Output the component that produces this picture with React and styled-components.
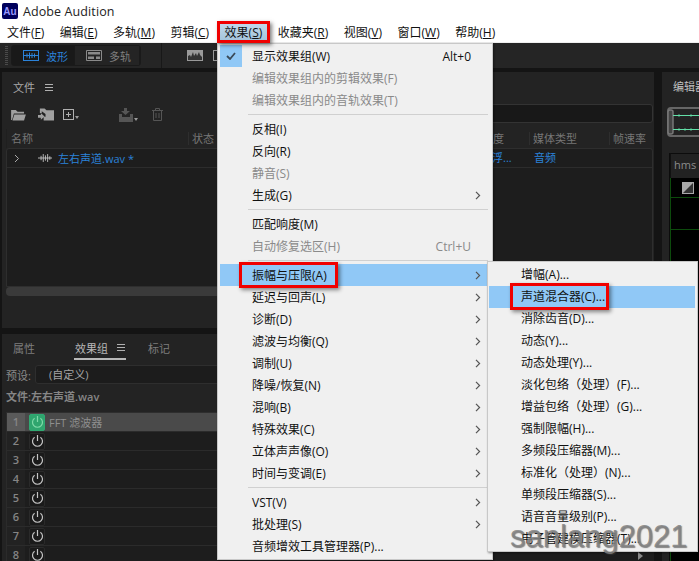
import React from 'react';
import styled, { createGlobalStyle } from 'styled-components';

const GlobalStyle = createGlobalStyle`
  html, body {
    margin: 0;
    padding: 0;
    background: #141414;
  }
  * {
    box-sizing: border-box;
  }
`;

const FONT = '"Open Sans", "Noto Sans CJK SC", sans-serif';
const BLUE = '#2b82d9';
const HIGHLIGHT = '#90c8f6';

const menuBar = [
  ['文件(', 'F', ')'],
  ['编辑(', 'E', ')'],
  ['多轨(', 'M', ')'],
  ['剪辑(', 'C', ')'],
  ['效果(', 'S', ')'],
  ['收藏夹(', 'R', ')'],
  ['视图(', 'V', ')'],
  ['窗口(', 'W', ')'],
  ['帮助(', 'H', ')']
];

const effectsMenu = [
  { label: '显示效果组(W)', shortcut: 'Alt+0', checked: true },
  { label: '编辑效果组内的剪辑效果(F)', disabled: true },
  { label: '编辑效果组内的音轨效果(T)', disabled: true },
  { separator: true },
  { label: '反相(I)' },
  { label: '反向(R)' },
  { label: '静音(S)', disabled: true },
  { label: '生成(G)', arrow: true },
  { separator: true },
  { label: '匹配响度(M)' },
  { label: '自动修复选区(H)', shortcut: 'Ctrl+U', disabled: true },
  { separator: true },
  { label: '振幅与压限(A)', arrow: true, active: true },
  { label: '延迟与回声(L)', arrow: true },
  { label: '诊断(D)', arrow: true },
  { label: '滤波与均衡(Q)', arrow: true },
  { label: '调制(U)', arrow: true },
  { label: '降噪/恢复(N)', arrow: true },
  { label: '混响(B)', arrow: true },
  { label: '特殊效果(C)', arrow: true },
  { label: '立体声声像(O)', arrow: true },
  { label: '时间与变调(E)', arrow: true },
  { separator: true },
  { label: 'VST(V)', arrow: true },
  { label: '批处理(S)', arrow: true },
  { label: '音频增效工具管理器(P)...' }
];

const amplitudeMenu = [
  { label: '增幅(A)...' },
  { label: '声道混合器(C)...', active: true },
  { label: '消除齿音(D)...' },
  { label: '动态(Y)...' },
  { label: '动态处理(Y)...' },
  { label: '淡化包络（处理）(F)...' },
  { label: '增益包络（处理）(G)...' },
  { label: '强制限幅(H)...' },
  { label: '多频段压缩器(M)...' },
  { label: '标准化（处理）(N)...' },
  { label: '单频段压缩器(S)...' },
  { label: '语音音量级别(P)...' },
  { label: '电子管建模压缩器(T)...' }
];

const Power = ({ color = '#c4c4c4' }) => (
  <svg width="13" height="14" viewBox="0 0 13 14" fill="none" stroke={color} strokeWidth="1.2">
    <path d="M6.5 1v6" />
    <path d="M3.6 3.2a5 5 0 1 0 5.8 0" />
  </svg>
);

const Chevron = () => (
  <svg width="6" height="9" viewBox="0 0 6 9" fill="none" stroke="#555" strokeWidth="1.2">
    <path d="M1 .8l3.6 3.7L1 8.2" />
  </svg>
);

const WaveGlyph = ({ color, width = 16 }) => (
  <svg width={width} height="10" viewBox="0 0 16 10" fill="none" stroke={color} strokeWidth="1">
    <path d="M0 5h16M3.5 2.5v5M6 .5v9M8.5 2v6M11 .5v9M13.5 3v4" />
  </svg>
);

export default function App() {
  return (
    <Page>
      <GlobalStyle />
      <TitleBar>
        <Logo>Au</Logo>
        <AppName>Adobe Audition</AppName>
      </TitleBar>
      <MenuBar>
        {menuBar.map(([before, key, after]) => (
          <MenuBarItem key={key}>
            {key === 'S' ? (
              <TopMark>
                {before}<u>{key}</u>{after}
              </TopMark>
            ) : (
              <>
                {before}<u>{key}</u>{after}
              </>
            )}
          </MenuBarItem>
        ))}
      </MenuBar>

      <Toolbar>
        <Grip />
        <ModeGroup>
          <ModeButton $active>
            <svg width="16" height="11" viewBox="0 0 16 11" fill="none" stroke={BLUE}>
              <rect x=".5" y=".5" width="15" height="10" />
              <path d="M1 5.5h14M4 3.5v4M6.5 2.5v6M9 3v5M11.5 3.5v4" />
            </svg>
            波形
          </ModeButton>
          <ModeButton>
            <svg width="16" height="11" viewBox="0 0 16 11" fill="#8a8a8a" stroke="#8a8a8a">
              <path d="M.5.5h15v10H.5z" fill="none" />
              <path d="M2 2h12v2.500H2zM2 6.500h6V9H2zM10 6.500h4V9h-4z" stroke="none" />
            </svg>
            多轨
          </ModeButton>
        </ModeGroup>
        <ToolDivider />
        <svg width="16" height="11" viewBox="0 0 16 11">
          <rect width="16" height="11" fill="#9a9a9a" />
          <path d="M1 10V6l2-1 1 2 2-5 1 4 2-3 1 3 2-4 1 3 2 2v3z" fill="#333" />
        </svg>
        <SmallSquare />
      </Toolbar>

      <Workspace>
        <LeftColumn>
          <FilesPanel>
            <PanelHead>
              <PanelTitle>文件</PanelTitle>
              <Hamburger />
            </PanelHead>
            <FileTools>
              <svg width="15" height="12" viewBox="0 0 16 13" fill="#a0a0a0">
                <path d="M0 1h5l2 2h7v2H3L1 12H0zM3.500 6H16l-2 6.500H1.500z" />
              </svg>
              <ImportIcon width="16" height="13" viewBox="0 0 17 13" fill="#a0a0a0">
                <path d="M2 0h5l2 2h8v11H6V9h2V6L4 3v2H2z" />
                <path d="M0 7h3V5l4 3.500L3 12v-2H0z" />
              </ImportIcon>
              <NewIcon>
                <svg width="11" height="11" viewBox="0 0 11 11" fill="none" stroke="#b0b0b0">
                  <rect x=".5" y=".5" width="10" height="10" />
                  <path d="M3 5.500h5M5.500 3v5" />
                </svg>
                <Caret />
              </NewIcon>
              <DimGroup>
                <svg width="14" height="14" viewBox="0 0 14 14" fill="#555">
                  <path d="M5 0h3v3h3L6.500 7 2 3h3zM0 6h3v3h8V6h3v8H0z" />
                </svg>
                <Caret />
              </DimGroup>
              <svg width="11" height="13" viewBox="0 0 11 13" fill="none" stroke="#555">
                <path d="M0 2.500h11M3.500 2.500V.5h4v2M1.500 2.500v10h8v-10M4 5v5M7 5v5" />
              </svg>
            </FileTools>
            <SearchField />
            <Columns>
              <ColumnName $left={4}>名称</ColumnName>
              <ColumnName $left={185}>状态</ColumnName>
              <ColumnName $left={486}>度</ColumnName>
              <ColumnName $left={526}>媒体类型</ColumnName>
              <ColumnName $left={606}>帧速率</ColumnName>
            </Columns>
            <FileList>
              <FileRow>
                <ExpandArrow>
                  <svg width="6" height="9" viewBox="0 0 6 9" fill="none" stroke="#aaa">
                    <path d="M1 1l3.500 3.500L1 8" />
                  </svg>
                </ExpandArrow>
                <WaveGlyph color="#c8c8c8" width={14} />
                <FileName>左右声道.wav *</FileName>
                <FileCell $left={474}>位浮...</FileCell>
                <FileCell $left={527}>音频</FileCell>
              </FileRow>
            </FileList>
            <ScrollStub />
          </FilesPanel>

          <EffectsPanel>
            <Tabs>
              <Tab>属性</Tab>
              <Tab $active $left={38}>
                效果组
                <Hamburger />
              </Tab>
              <Tab $left={21}>标记</Tab>
            </Tabs>
            <PresetRow>
              <PresetLabel>预设:</PresetLabel>
              <PresetSelect>(自定义)</PresetSelect>
            </PresetRow>
            <FileCaption>文件:左右声道.wav</FileCaption>
            <Rack>
              {[1, 2, 3, 4, 5, 6, 7, 8].map(n => (
                <RackRow key={n} $active={n === 1}>
                  <RackNumber $active={n === 1}>{n}</RackNumber>
                  <PowerButton $active={n === 1}>
                    <Power color={n === 1 ? '#7fd9a8' : '#c4c4c4'} />
                  </PowerButton>
                  {n === 1 && <RackLabel>FFT 滤波器</RackLabel>}
                </RackRow>
              ))}
            </Rack>
            <ScrollArrow />
          </EffectsPanel>
        </LeftColumn>

        <EditorPanel>
          <EditorTitle>编辑器</EditorTitle>
          <Overview>
            <svg width="40" height="30" viewBox="0 0 40 30" fill="none">
              <rect x="1" y="1" width="60" height="28" rx="3" stroke="#666" strokeWidth="2" />
              <rect x="1" y="3" width="5" height="24" rx="2" stroke="#777" strokeWidth="1.500" fill="#444" />
              <path d="M6 8.500h34M6 22.500h34" stroke="#63e0a8" />
              <path d="M12 7v3M24 7v3M12 21v3M18 21v3M24 21v3" stroke="#63e0a8" strokeWidth=".7" />
            </svg>
          </Overview>
          <Timeline>
            <TimelineHead>hms</TimelineHead>
            <TrackRow $height={20}>
              <svg width="12" height="12" viewBox="0 0 12 12">
                <rect width="12" height="12" fill="#a8a8a8" />
                <path d="M11 1v10H1z" fill="#333" />
              </svg>
            </TrackRow>
            <TrackRow $height={32} />
            <TrackFill />
          </Timeline>
        </EditorPanel>
      </Workspace>

      <MainMenu>
        {effectsMenu.map((item, i) =>
          item.separator ? (
            <Separator key={i} />
          ) : (
            <MainItem key={i} $active={item.active} $disabled={item.disabled}>
              <CheckCell $checked={item.checked}>
                {item.checked && (
                  <svg width="10" height="8" viewBox="0 0 10 8" fill="none" stroke="#3a4a58" strokeWidth="1.800">
                    <path d="M1 4l3 3 5-6" />
                  </svg>
                )}
              </CheckCell>
              {item.active ? <LabelMark $l={13} $r={11} $v={4}>{item.label}</LabelMark> : <span>{item.label}</span>}
              <Shortcut>{item.shortcut}</Shortcut>
              {item.arrow && <Chevron />}
            </MainItem>
          )
        )}
      </MainMenu>

      <SubMenu>
        {amplitudeMenu.map(item => (
          <SubItem key={item.label} $active={item.active}>
            {item.active ? <LabelMark $l={11} $r={4} $v={5}>{item.label}</LabelMark> : item.label}
          </SubItem>
        ))}
      </SubMenu>

      <Watermark>sanlang2021</Watermark>
    </Page>
  );
}

const Page = styled.div`
  position: relative;
  display: flex;
  flex-direction: column;
  width: 699px;
  height: 561px;
  overflow: hidden;
  background: #141414;
  font-family: ${FONT};
  font-size: 11px;
  color: #8f8f8f;
`;

const TitleBar = styled.div`
  display: flex;
  align-items: center;
  gap: 5px;
  height: 22px;
  padding: 0 0 0 2px;
  background: #fff;
`;

const Logo = styled.div`
  display: flex;
  align-items: center;
  justify-content: center;
  width: 16px;
  height: 16px;
  border-radius: 2px;
  background: #00005b;
  color: #9999ff;
  font-family: "Liberation Sans", sans-serif;
  font-size: 10px;
  font-weight: 700;
`;

const AppName = styled.div`
  color: #222;
  font-size: 12.500px;
  letter-spacing: .1px;
`;

const MenuBar = styled.div`
  display: flex;
  align-items: center;
  gap: 15.500px;
  height: 21px;
  padding-left: 7px;
  background: #fff;
  border-bottom: 1px solid #eee;
  font-size: 12px;
`;

const MenuBarItem = styled.div`
  position: relative;
  height: 22px;
  color: #111;
  white-space: nowrap;
  line-height: 24px;
  u {
    text-underline-offset: 1px;
  }
`;

const TopMark = styled.span`
  display: block;
  position: relative;
  z-index: 5;
  height: 22px;
  margin: 0 -8px;
  padding: 0 8px;
  background: linear-gradient(#c6dcec, #9fc1da);
  outline: 3px solid #f00000;
  outline-offset: -3px;
  box-shadow: 2px 2px 4px rgba(0, 0, 0, .5);
`;

const Toolbar = styled.div`
  display: flex;
  align-items: center;
  height: 25px;
  padding: 0 0 0 5px;
  background: #252525;
  svg {
    flex: none;
  }
`;

const Grip = styled.div`
  width: 3px;
  height: 20px;
  background: repeating-linear-gradient(#4a4a4a 0 1px, transparent 1px 2px);
`;

const ModeGroup = styled.div`
  display: flex;
  margin: 0 20px 0 3px;
  height: 21px;
  border: 1px solid #1a1a1a;
  border-radius: 3px;
  background: #1f1f1f;
`;

const ModeButton = styled.div`
  display: flex;
  align-items: center;
  gap: 7px;
  width: ${props => (props.$active ? '63px' : '65px')};
  padding-left: 11px;
  background: ${props => (props.$active ? '#191919' : '#242424')};
  border-right: 1px solid #1a1a1a;
  color: ${props => (props.$active ? BLUE : '#7e7e7e')};
`;

const ToolDivider = styled.div`
  width: 1px;
  height: 25px;
  margin-right: 25px;
  background: #181818;
`;

const SmallSquare = styled.div`
  width: 6px;
  height: 11px;
  margin-left: 10px;
  border: 1px solid #999;
`;

const Workspace = styled.div`
  flex: 1;
  display: grid;
  grid-template-columns: 652px 1fr;
  gap: 8px;
  padding: 4px 0 0 2px;
  min-height: 0;
  background: #141414;
`;

const LeftColumn = styled.div`
  display: grid;
  grid-template-rows: 256px 1fr;
  gap: 6px;
  min-height: 0;
`;

const FilesPanel = styled.section`
  position: relative;
  display: flex;
  flex-direction: column;
  background: #232323;
  padding: 0 0 0 4px;
`;

const PanelHead = styled.div`
  display: flex;
  align-items: center;
  gap: 10px;
  height: 30px;
  padding-left: 7px;
`;

const PanelTitle = styled.div`
  color: #a8a8a8;
`;

const Hamburger = styled.span`
  display: inline-block;
  position: relative;
  width: 8px;
  height: 7px;
  border-top: 1px solid #b0b0b0;
  border-bottom: 1px solid #b0b0b0;
  &::after {
    content: '';
    position: absolute;
    left: 0;
    right: 0;
    top: 2px;
    height: 1px;
    background: #b0b0b0;
  }
`;

const FileTools = styled.div`
  display: flex;
  align-items: center;
  height: 21px;
  padding-left: 5px;
  margin-top: 2px;
  color: #a0a0a0;
`;

const ImportIcon = styled.svg`
  margin-left: 12px;
`;

const NewIcon = styled.div`
  display: flex;
  align-items: flex-end;
  margin-left: 9px;
`;

const Caret = styled.span`
  width: 0;
  height: 0;
  margin: 0 0 1px 1px;
  border: 2px solid transparent;
  border-top: 3px solid #9a9a9a;
  border-bottom: 0;
`;

const DimGroup = styled.div`
  display: flex;
  align-items: flex-end;
  margin: 0 14px 0 40px;
`;

const SearchField = styled.div`
  position: absolute;
  right: 1px;
  top: 32px;
  width: 436px;
  height: 19px;
  border: 1px solid #333;
  border-radius: 3px;
  background: #181818;
`;

const Columns = styled.div`
  position: relative;
  height: 19px;
  margin-top: 4px;
  color: #767676;
  background: #232323;
  border-left: 1px solid #1f1f1f;
`;

const ColumnName = styled.span`
  position: absolute;
  left: ${props => props.$left}px;
  top: 0;
  line-height: 19px;
  &:not(:first-child)::before {
    content: '';
    position: absolute;
    left: -4px;
    top: 3px;
    bottom: 3px;
    width: 1px;
    background: #2e2e2e;
  }
`;

const FileList = styled.div`
  margin: 0 1px 0 0;
  height: 139px;
  background: #1d1d1d;
  border: 1px solid #2e2e2e;
  border-radius: 3px 3px 0 0;
`;

const FileRow = styled.div`
  position: relative;
  display: flex;
  align-items: center;
  height: 19px;
  border-bottom: 1px solid #2c2c2c;
  color: ${BLUE};
`;

const ExpandArrow = styled.span`
  display: flex;
  width: 31px;
  padding-left: 7px;
`;

const FileName = styled.span`
  margin-left: 6px;
  white-space: nowrap;
`;

const FileCell = styled.span`
  position: absolute;
  left: ${props => props.$left}px;
  top: 0;
  line-height: 18px;
  white-space: nowrap;
`;

const ScrollStub = styled.div`
  height: 9px;
  margin: 0 1px 0 0;
  background: #3a3a3a;
  border-radius: 4px;
`;

const EffectsPanel = styled.section`
  position: relative;
  display: flex;
  flex-direction: column;
  min-height: 0;
  overflow: hidden;
  background: #232323;
`;

const ScrollArrow = styled.span`
  position: absolute;
  left: 636px;
  bottom: 1px;
  border-left: 5px solid #8a8a8a;
  border-top: 4px solid transparent;
  border-bottom: 4px solid transparent;
`;

const Tabs = styled.div`
  display: flex;
  flex: none;
  height: 26px;
  padding-left: 10px;
`;

const Tab = styled.div`
  display: flex;
  align-items: center;
  gap: 9px;
  height: 26px;
  margin-left: ${props => props.$left || 0}px;
  padding: 3px 1px 0;
  color: ${props => (props.$active ? '#b8b8b8' : '#7e7e7e')};
  border-bottom: 2px solid ${props => (props.$active ? '#b8b8b8' : 'transparent')};
`;

const PresetRow = styled.div`
  display: flex;
  flex: none;
  align-items: center;
  gap: 4px;
  height: 19px;
  margin-top: 5px;
  padding-left: 4px;
`;

const PresetLabel = styled.span`
  color: #8a8a8a;
`;

const PresetSelect = styled.div`
  flex: 1;
  height: 19px;
  padding-left: 13px;
  line-height: 18px;
  color: #a4a4a4;
  background: #1c1c1c;
  border: 1px solid #2e2e2e;
  border-radius: 3px;
`;

const FileCaption = styled.div`
  flex: none;
  height: 20px;
  margin-top: 3px;
  padding-left: 4px;
  line-height: 20px;
  font-weight: 600;
  color: #868686;
`;

const Rack = styled.div`
  flex: none;
  margin: 5px 0 0 4px;
  border-top: 1px solid #2e2e2e;
  border-left: 1px solid #2b2b2b;
`;

const RackRow = styled.div`
  display: flex;
  align-items: center;
  height: 19px;
  background: ${props => (props.$active ? '#4a4a4a' : '#1d1d1d')};
  border-bottom: 1px solid #2b2b2b;
`;

const RackNumber = styled.div`
  width: 18px;
  height: 100%;
  margin-right: 1px;
  line-height: 18px;
  text-align: center;
  font-weight: 600;
  color: #858585;
  background: ${props => (props.$active ? '#5a5a5a' : '#222')};
`;

const PowerButton = styled.div`
  display: flex;
  align-items: center;
  justify-content: center;
  flex: none;
  width: 16px;
  height: 17px;
  margin-left: 3px;
  border: 1px solid ${props => (props.$active ? '#2faa72' : '#2a2a2a')};
  border-radius: 2px;
  background: ${props => (props.$active ? '#2fa56e' : '#1a1a1a')};
`;

const RackLabel = styled.span`
  margin-left: 4px;
  color: #8e8e8e;
  white-space: nowrap;
`;

const EditorPanel = styled.section`
  display: flex;
  flex-direction: column;
  min-width: 0;
  overflow: hidden;
  background: #232323;
  padding-left: 5px;
`;

const EditorTitle = styled.div`
  flex: none;
  height: 30px;
  padding-left: 6px;
  line-height: 29px;
  color: #c0c0c0;
  white-space: nowrap;
`;

const Overview = styled.div`
  flex: none;
  height: 30px;
  margin-top: 5px;
`;

const Timeline = styled.div`
  flex: 1;
  display: flex;
  flex-direction: column;
  margin: 16px 0 0 2px;
  background: #000;
  border-left: 1px solid #0c0c0c;
`;

const TimelineHead = styled.div`
  flex: none;
  height: 25px;
  padding-left: 3px;
  line-height: 22px;
  color: #8c8c8c;
  background: #222;
  border-left: 1px solid #111;
  border-top: 1px solid #0c0c0c;
`;

const TrackRow = styled.div`
  display: flex;
  flex: none;
  align-items: center;
  height: ${props => props.$height}px;
  padding-left: 11px;
  border-left: 1px solid #0c4a0c;
  border-bottom: 1px solid #0c4a0c;
`;

const TrackFill = styled.div`
  flex: 1;
  border-left: 1px solid #0c4a0c;
`;

const MainMenu = styled.nav`
  position: absolute;
  left: 217px;
  top: 43px;
  bottom: 1px;
  width: 276px;
  padding: 1px 2px;
  background: #f0f0f0;
  border: 1px solid #c8c8c8;
  box-shadow: 1px 1px 2px rgba(0, 0, 0, .4);
  font-size: 12px;
  z-index: 2;
`;

const MainItem = styled.div`
  display: flex;
  align-items: center;
  height: 22px;
  padding-right: 9px;
  white-space: nowrap;
  color: ${props => (props.$disabled ? '#8a8a8a' : '#111')};
  background: ${props => (props.$active ? HIGHLIGHT : 'transparent')};
`;

const CheckCell = styled.span`
  display: flex;
  align-items: center;
  justify-content: center;
  flex: none;
  width: 22px;
  height: 22px;
  margin-right: 10px;
  background: ${props => (props.$checked ? HIGHLIGHT : 'transparent')};
`;

const Shortcut = styled.span`
  margin-left: auto;
  padding-right: 10px;
`;

const Separator = styled.div`
  height: 1px;
  margin: 3px 2px 3px 28px;
  background: #d0d0d0;
`;

const LabelMark = styled.span`
  position: relative;
  &::after {
    content: '';
    position: absolute;
    inset: -${props => props.$v}px -${props => props.$r}px -${props => props.$v}px -${props => props.$l}px;
    border: 3px solid #f00000;
    box-shadow: 2px 2px 4px rgba(0, 0, 0, .45);
  }
`;

const SubMenu = styled.nav`
  position: absolute;
  left: 487px;
  top: 261px;
  width: 211px;
  height: 291px;
  padding: 2px 2px 2px 1px;
  background: #f0f0f0;
  border: 1px solid #c8c8c8;
  box-shadow: 1px 1px 2px rgba(0, 0, 0, .4);
  font-size: 12px;
  z-index: 3;
`;

const SubItem = styled.div`
  height: 22px;
  padding-left: 32px;
  line-height: 22px;
  white-space: nowrap;
  color: #111;
  background: ${props => (props.$active ? HIGHLIGHT : 'transparent')};
`;

const Watermark = styled.div`
  position: absolute;
  left: 510px;
  top: 519px;
  z-index: 6;
  font-family: "Liberation Sans", sans-serif;
  font-size: 31px;
  line-height: 36px;
  color: rgba(130, 130, 130, .85);
  text-shadow: 1px 1px 1px rgba(60, 60, 60, .6);
`;
